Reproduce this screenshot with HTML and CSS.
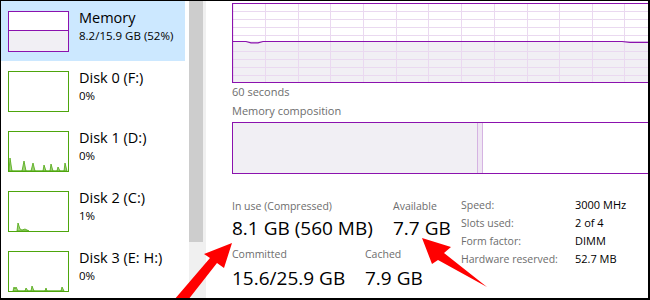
FILE: index.html
```html
<!DOCTYPE html>
<html>
<head>
    <title>Task Manager - Memory</title>
    <link rel="stylesheet" href="styles.css">
</head>
<body>
<div id="frame">
    <div id="sidebar">
        <div class="item selected">
            <div class="thumb mem">
                <div class="mem-fill"></div>
            </div>
            <div class="info">
                <div class="name">Memory</div>
                <div class="sub">8.2/15.9 GB (52%)</div>
            </div>
        </div>
        <div class="item">
            <div class="thumb disk"></div>
            <div class="info">
                <div class="name">Disk 0 (F:)</div>
                <div class="sub">0%</div>
            </div>
        </div>
        <div class="item">
            <div class="thumb disk">
                <svg width="59" height="39" viewBox="0 0 59 39">
                    <polygon class="spike" points="0,39 1,26 3,39 13,39 15,29 17,39 22,39 24,31 26,39 34,39 35,33 37,39 41,39 42,32 44,39 48,39 49,35 51,39 55,39 56,31 58,39"/>
                </svg>
            </div>
            <div class="info">
                <div class="name">Disk 1 (D:)</div>
                <div class="sub">0%</div>
            </div>
        </div>
        <div class="item">
            <div class="thumb disk">
                <svg width="59" height="39" viewBox="0 0 59 39">
                    <polygon class="spike" points="8,39 9,31 11,37 13,38 16,37 18,38 20,39"/>
                </svg>
            </div>
            <div class="info">
                <div class="name">Disk 2 (C:)</div>
                <div class="sub">1%</div>
            </div>
        </div>
        <div class="item">
            <div class="thumb disk">
                <svg width="59" height="39" viewBox="0 0 59 39">
                    <polygon class="spike" points="4,39 5,35 6,37 7,35 9,39 16,39 17,36 19,39 22,39 23,34 25,39 36,39 37,36 38,39 52,39 53,35 55,39"/>
                </svg>
            </div>
            <div class="info">
                <div class="name">Disk 3 (E: H:)</div>
                <div class="sub">0%</div>
            </div>
        </div>
    </div>

    <div id="scrollbar">
        <div class="thumb-bar"></div>
    </div>

    <div id="main">
        <svg class="graph" width="420" height="80" viewBox="0 0 420 80">
            <rect x="0" y="38" width="420" height="42" fill="#f1eff4"/>
            <g stroke="#ead9f0" stroke-width="1">
                <line x1="33.5" y1="0" x2="33.5" y2="80"/>
                <line x1="66.5" y1="0" x2="66.5" y2="80"/>
                <line x1="98.5" y1="0" x2="98.5" y2="80"/>
                <line x1="131.5" y1="0" x2="131.5" y2="80"/>
                <line x1="164.5" y1="0" x2="164.5" y2="80"/>
                <line x1="196.5" y1="0" x2="196.5" y2="80"/>
                <line x1="229.5" y1="0" x2="229.5" y2="80"/>
                <line x1="262.5" y1="0" x2="262.5" y2="80"/>
                <line x1="295.5" y1="0" x2="295.5" y2="80"/>
                <line x1="327.5" y1="0" x2="327.5" y2="80"/>
                <line x1="360.5" y1="0" x2="360.5" y2="80"/>
                <line x1="392.5" y1="0" x2="392.5" y2="80"/>
                <line x1="0" y1="8.5" x2="420" y2="8.5"/>
                <line x1="0" y1="16.5" x2="420" y2="16.5"/>
                <line x1="0" y1="24.5" x2="420" y2="24.5"/>
                <line x1="0" y1="32.5" x2="420" y2="32.5"/>
                <line x1="0" y1="48.5" x2="420" y2="48.5"/>
                <line x1="0" y1="56.5" x2="420" y2="56.5"/>
                <line x1="0" y1="64.5" x2="420" y2="64.5"/>
                <line x1="0" y1="72.5" x2="420" y2="72.5"/>
            </g>
            <polyline points="0,38.5 14,38.5 19,39.8 26,39.8 31,38.5 390,38.5 398,39.3 420,39.3" fill="none" stroke="#8b12ae" stroke-width="1.2"/>
            <path d="M0.5,80 V0.5 H420 M0,79.5 H420" fill="none" stroke="#8b12ae" stroke-width="1.2"/>
        </svg>
        <div class="caption">60 seconds</div>
        <div class="caption section">Memory composition</div>
        <div class="composition">
            <div class="in-use"></div>
            <div class="modified"></div>
            <div class="free"></div>
        </div>

        <div class="stats">
            <div class="stats-left">
                <div class="stat-row">
                    <div class="stat col-inuse">
                        <div class="label">In use (Compressed)</div>
                        <div class="value">8.1 GB (560 MB)</div>
                    </div>
                    <div class="stat">
                        <div class="label">Available</div>
                        <div class="value">7.7 GB</div>
                    </div>
                </div>
                <div class="stat-row second">
                    <div class="stat col-committed">
                        <div class="label">Committed</div>
                        <div class="value">15.6/25.9 GB</div>
                    </div>
                    <div class="stat">
                        <div class="label">Cached</div>
                        <div class="value">7.9 GB</div>
                    </div>
                </div>
            </div>
            <div class="specs">
                <span class="label">Speed:</span><span>3000 MHz</span>
                <span class="label">Slots used:</span><span>2 of 4</span>
                <span class="label">Form factor:</span><span>DIMM</span>
                <span class="label">Hardware reserved:</span><span>52.7 MB</span>
            </div>
        </div>
    </div>

    <!-- flechas rojas de anotación -->
    <svg class="arrows" width="650" height="300" viewBox="0 0 650 300">
        <polygon points="232,243 224,268 217,263 188,300 174,300 210,258 204,254" fill="#f00"/>
        <polygon points="422,238 451,247 444,253 487,287 438,260 432,264" fill="#f00"/>
    </svg>
</div>
</body>
</html>
```

FILE: styles.css
```css
body {
    margin: 0;
    background: #fff;
    font-family: "Open Sans", "Noto Sans", Arial, sans-serif;
    color: #000;
}
#frame {
    position: relative;
    width: 650px;
    height: 300px;
    box-sizing: border-box;
    border-style: solid;
    border-color: #000;
    border-width: 1px 2px 2px 1px;
    display: flex;
    overflow: hidden;
    background: #fff;
}

/* lista lateral */
#sidebar {
    width: 184px;
    flex-shrink: 0;
}
.item {
    height: 60px;
    box-sizing: border-box;
    padding: 8px 0 0 7px;
    display: flex;
    align-items: flex-start;
}
.item.selected { background: #cce8ff; }
.thumb {
    width: 61px;
    height: 41px;
    box-sizing: border-box;
    margin-top: 2px;
    position: relative;
    background: #fff;
    overflow: hidden;
}
.thumb svg { display: block; }
.thumb.mem { border: 1px solid #8b12ae; }
.mem-fill {
    margin-top: 18px;
    height: 21px;
    border-top: 1px solid #8b12ae;
    background: #f1eff4;
}
.thumb.disk { border: 1px solid #4da60c; }
.spike {
    fill: #9fd27a;
    stroke: #4da60c;
    stroke-width: 0.8;
}
.info { margin-left: 10px; }
.name {
    font-size: 14.5px;
    line-height: 18px;
}
.sub {
    font-size: 11.5px;
    line-height: 16px;
    margin-top: 1px;
}

/* barra de desplazamiento */
#scrollbar {
    width: 17px;
    margin-left: 4px;
    flex-shrink: 0;
    background: #f0f0f0;
}
.thumb-bar {
    width: 14px;
    height: 241px;
    background: #cdcdcd;
}

/* panel principal */
#main {
    flex: 1;
    padding: 2px 0 0 26px;
    overflow: hidden;
    min-width: 0;
}
.graph { display: block; }
.caption {
    font-size: 11px;
    line-height: 15px;
    color: #6d6d6d;
    margin-top: 1px;
    white-space: nowrap;
}
.caption.section { margin-top: 4px; }
.composition {
    margin-top: 4px;
    width: 430px;
    height: 52px;
    box-sizing: border-box;
    border: 1px solid #8b12ae;
    border-right: none;
    display: flex;
}
.in-use {
    width: 244px;
    background: #f1eff4;
}
.modified {
    width: 4px;
    background: #efe6f3;
    border-left: 1px solid #d5b3e2;
    border-right: 1px solid #d5b3e2;
}
.free { flex: 1; }

.stats {
    display: flex;
    align-items: flex-start;
    margin-top: 25px;
    white-space: nowrap;
}
.stats-left { width: 229px; }
.stat-row { display: flex; }
.stat-row.second { margin-top: 7px; }
.col-inuse { width: 161px; }
.col-committed { width: 133px; }
.label {
    font-size: 10.5px;
    line-height: 15px;
    color: #6d6d6d;
}
.value {
    font-size: 19px;
    line-height: 24px;
    margin-top: 2px;
}
.stat-row.second .value { margin-top: 4px; }
.specs {
    display: grid;
    grid-template-columns: 114px auto;
    grid-auto-rows: 18px;
    margin-top: -3px;
    font-size: 11px;
    line-height: 18px;
}
.specs .label { line-height: 18px; }

.arrows {
    position: absolute;
    left: -1px;
    top: -1px;
    pointer-events: none;
}
```
